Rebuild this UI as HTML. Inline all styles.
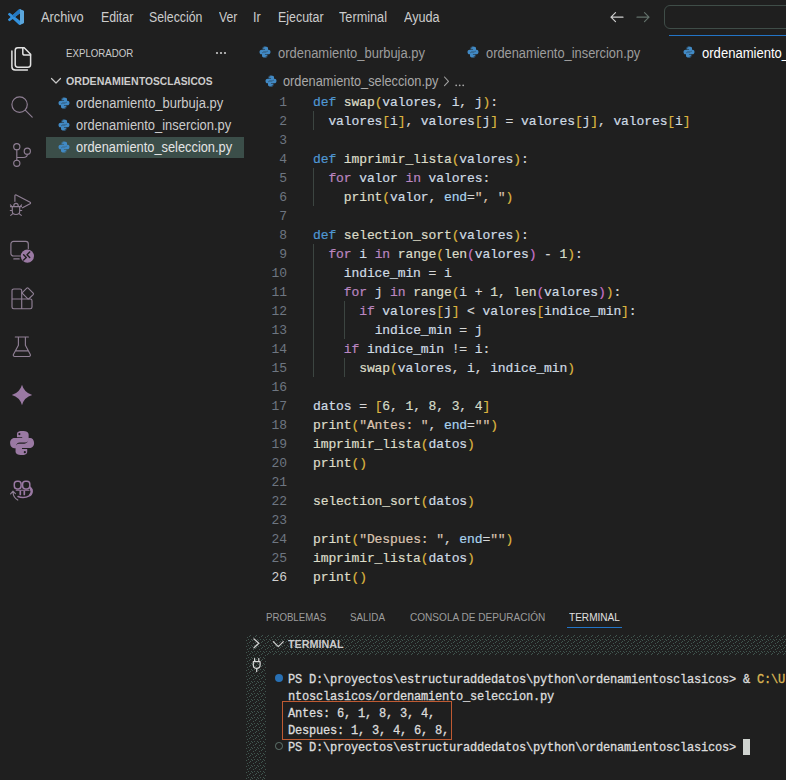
<!DOCTYPE html>
<html lang="es"><head><meta charset="utf-8"><title>ordenamiento_seleccion.py - Visual Studio Code</title>
<style>
html,body{margin:0;padding:0;background:#1f1f1f;}
body{width:786px;height:780px;overflow:hidden;position:relative;font-family:"Liberation Sans", sans-serif;font-size:13px;color:#ccc;}
#app{position:absolute;left:0;top:0;width:786px;height:780px;overflow:hidden;background:#1f1f1f;}
.t{position:absolute;white-space:pre;line-height:20px;height:20px;transform-origin:0 50%;}
.abs{position:absolute;}
.layer{position:absolute;left:0;top:0;width:0;height:0;}
svg{position:absolute;overflow:visible;}
.code{position:absolute;left:313px;top:93px;font-family:"Liberation Mono", monospace;font-size:13px;letter-spacing:-0.1px;color:#d6d6d6;white-space:pre;-webkit-text-stroke:0.2px;}
.code div{height:19px;line-height:19px;}
.ln{position:absolute;left:246px;top:93px;width:41px;text-align:right;font-family:"Liberation Mono", monospace;font-size:13px;letter-spacing:-0.1px;color:#6e7681;}
.ln div{height:19px;line-height:19px;}
.ln .act{color:#d0d0d0;}
.k{color:#4f97d3;} .c{color:#bb86c0;} .b1{color:#dcb440;} .b2{color:#c873c9;} .b3{color:#2f9bf0;}
.s{color:#dcc4b0;} .p{color:#a9d3ee;} .v{color:#cfdbe4;} .f{color:#dcdcc8;} .n{color:#d4dcc8;}
.guide{position:absolute;width:1px;background:#3c4541;}
.term{position:absolute;left:288px;font-family:"Liberation Mono", monospace;font-size:12px;letter-spacing:-0.2px;color:#dcdcdc;white-space:pre;height:17px;line-height:17px;-webkit-text-stroke:0.3px;}
.y{color:#dcb654;}

</style></head><body><div id="app">
<header class="layer" id="titlebar" aria-label="Barra de título">
<div class="abs" style="left:664px;top:5px;width:140px;height:22px;border:1px solid #3f4d48;border-radius:6px"></div>
<span class="t" style="left:41.3px;top:8.0px;font-size:13.8px;font-weight:400;color:#cccccc;transform:scaleX(0.9279)">Archivo</span>
<span class="t" style="left:101px;top:8.0px;font-size:13.8px;font-weight:400;color:#cccccc;transform:scaleX(0.8961)">Editar</span>
<span class="t" style="left:149.3px;top:8.0px;font-size:13.8px;font-weight:400;color:#cccccc;transform:scaleX(0.8926)">Selección</span>
<span class="t" style="left:219px;top:8.0px;font-size:13.8px;font-weight:400;color:#cccccc;transform:scaleX(0.8833)">Ver</span>
<span class="t" style="left:253.3px;top:8.0px;font-size:13.8px;font-weight:400;color:#cccccc;transform:scaleX(0.9126)">Ir</span>
<span class="t" style="left:277.7px;top:8.0px;font-size:13.8px;font-weight:400;color:#cccccc;transform:scaleX(0.9007)">Ejecutar</span>
<span class="t" style="left:339.3px;top:8.0px;font-size:13.8px;font-weight:400;color:#cccccc;transform:scaleX(0.9206)">Terminal</span>
<span class="t" style="left:403.7px;top:8.0px;font-size:13.8px;font-weight:400;color:#cccccc;transform:scaleX(0.9158)">Ayuda</span>
<svg style="left:8px;top:9px" width="16" height="16" viewBox="0 0 24 24"><defs><clipPath id="vc"><path d="M23.15 2.587L18.21.21a1.494 1.494 0 0 0-1.705.29l-9.46 8.63-4.12-3.128a.999.999 0 0 0-1.276.057L.327 7.261A1 1 0 0 0 .326 8.74L3.899 12 .326 15.26a1 1 0 0 0 .001 1.479L1.65 17.94a.999.999 0 0 0 1.276.057l4.12-3.128 9.46 8.63a1.492 1.492 0 0 0 1.704.29l4.942-2.377A1.5 1.5 0 0 0 24 20.06V3.939a1.5 1.5 0 0 0-.85-1.352zm-5.146 14.861L10.826 12l7.178-5.448v10.896z"/></clipPath></defs><g clip-path="url(#vc)"><rect width="24" height="24" fill="#3391dc"/><path d="M6.5 9.5L17 0h1.500v6.200L10.800 12H8z" fill="#2478c0"/><rect x="17.900" y="0" width="6.100" height="24" fill="#5ba6dc"/></g></svg>
<svg style="left:0;top:0" width="786" height="40" viewBox="0 0 786 40" fill="none" stroke-linecap="round" stroke-linejoin="round"><path stroke="#cfcfcf" stroke-width="1.2" d="M623 17.200H611M615.500 12.700l-4.500 4.500 4.500 4.500"/><path stroke="#63716b" stroke-width="1.2" d="M637 17.200h12M644.500 12.700l4.500 4.500-4.500 4.500"/></svg>
</header>
<nav class="layer" id="activitybar" aria-label="Barra de actividades">
<svg style="left:0;top:0" width="48" height="780" viewBox="0 0 48 780" fill="none" stroke-linecap="round" stroke-linejoin="round">
<g stroke="#e2e2e2" stroke-width="1.5"><path d="M17.8 47.8h6.400l6.400 6.400v10.400a2.600 2.600 0 0 1-2.600 2.600H17.800a2.600 2.600 0 0 1-2.600-2.600V50.400a2.600 2.600 0 0 1 2.600-2.600z"/><path d="M22.800 48v5.200a1.900 1.900 0 0 0 1.900 1.900h5.800"/><path d="M11.900 51v15.800a3.200 3.200 0 0 0 3.200 3.200h12.300"/></g>
<g stroke="#8f7f94" stroke-width="1.150"><circle cx="19.600" cy="104.600" r="7.700"/><path d="M25.200 110.200l7 7"/></g>
<g stroke="#8f7f94" stroke-width="1.150"><circle cx="16.800" cy="146.700" r="3.100"/><circle cx="27.300" cy="151.200" r="3.100"/><circle cx="16.800" cy="163.300" r="3.100"/><path d="M16.800 149.800v10.400M27.300 154.300c0 2.400-1.500 3.200-4 3.200h-6.500"/></g>
<g stroke="#8f7f94" stroke-width="1.15"><path d="M14.900 201.300v-5.600a.9.900 0 0 1 1.300-.8l13.900 7.300a.9.900 0 0 1 0 1.600l-7.600 4"/><path d="M12.300 206.600h7.400v4.700a3.700 3.200 0 0 1-7.400 0zM13.700 206.400a2.300 3 0 0 1 4.600 0M10.500 206.600h11M12.300 210.500h-2M19.700 210.500h2M12.900 213.600l-2.200 1.800M19.100 213.600l2.200 1.800M11.800 206.300l-1.400-1.400M20.200 206.300l1.400-1.400"/></g>
<g stroke="#8f7f94" stroke-width="1.150"><path d="M20.300 256H13.500a2.600 2.600 0 0 1-2.600-2.600V244a2.600 2.600 0 0 1 2.600-2.600h12.200a2.600 2.600 0 0 1 2.600 2.600v4.600M13.800 258.900h5.400"/></g><circle cx="27.400" cy="256.100" r="6.600" fill="#9a79a3"/><path stroke="#1f1f1f" stroke-width="1.400" d="M23.600 254.700l2.700 2.700-2.700 2.700M29.700 252l-2.700 2.700 2.700 2.700"/>
<g stroke="#8f7f94" stroke-width="1.150"><path d="M21.700 299v-8.300a1.700 1.700 0 0 0-1.700-1.700h-6.300a1.700 1.700 0 0 0-1.700 1.700V307a1.700 1.700 0 0 0 1.700 1.700h16.600a1.700 1.700 0 0 0 1.700-1.700v-6.300a1.700 1.700 0 0 0-1.700-1.700H12M21.700 299v9.700"/><path d="M22.300 292.700l4.500-4.500a1 1 0 0 1 1.400 0l5 5a1 1 0 0 1 0 1.400l-4.600 4.400M21.900 292.800l6 6"/></g>
<g stroke="#8f7f94" stroke-width="1.150"><path d="M15.300 337h13.100M18.400 337v8.300l-5 9.200a1.400 1.400 0 0 0 1.200 2h14.500a1.400 1.400 0 0 0 1.200-2l-4.900-9.200V337M16 350.800h11.800"/></g>
<path fill="#9a79a3" d="M22 384.800Q24.200 392.800 32.200 395 24.200 397.200 22 405.200 19.800 397.200 11.800 395 19.800 392.800 22 384.800z"/>
</svg>
<svg style="left:9.1px;top:430.1px" width="26.2" height="26.2" viewBox="0 0 24 24"><g fill="#9a79a3" fill-rule="evenodd"><path d="M11.9 1C8 1 7.3 2.6 7.3 4.2V6.6h4.8v.8H5.2C3 7.4 1 8.9 1 12s1.8 4.7 3.6 4.7h1.9v-1.9c0-1.900 1.500-3.300 3.400-3.300h5.100c1.700 0 3-1.400 3-3.100V4.200C18 2.500 16.500 1 11.900 1zM9.500 2.700a1 1 0 1 1 0 2 1 1 0 0 1 0-2z"/><path transform="rotate(180 12 12)" d="M11.9 1C8 1 7.3 2.6 7.3 4.2V6.6h4.8v.8H5.2C3 7.4 1 8.9 1 12s1.8 4.7 3.6 4.7h1.9v-1.9c0-1.900 1.500-3.300 3.400-3.300h5.100c1.700 0 3-1.400 3-3.100V4.200C18 2.500 16.500 1 11.900 1zM9.500 2.700a1 1 0 1 1 0 2 1 1 0 0 1 0-2z"/></g></svg>
<svg style="left:0;top:0" width="48" height="780" viewBox="0 0 48 780" fill="none" stroke-linecap="round" stroke-linejoin="round"><g stroke="#9a79a3" stroke-width="1.500"><rect x="14.300" y="481.300" width="6.800" height="7.600" rx="2.800"/><rect x="22.600" y="481.300" width="7.200" height="7.600" rx="2.800"/><path d="M30 487c1.600 1.200 2 2.500 2 4.500 0 3.500-4.500 6-9 6-2 0-3.600-.4-5-1"/><path d="M20.300 491.300v3.200M24.300 491.300v3.200" stroke-width="1.700"/><path d="M30.900 488.800c1 1.500 1 4.300-.7 6.200" stroke-width="2.400"/><path d="M16.200 490.200h12.800" stroke-width="1.100"/><path d="M17.800 500c-3-1.500-4.600-4.500-4.800-8M10.600 493.800l2.400-2.600 2.400 2.400" stroke="#8f7f94" stroke-width="1.200"/></g></svg>
</nav>
<aside class="layer" id="sidebar" aria-label="Explorador">
<div class="abs" style="left:46px;top:137px;width:198px;height:21px;background:#3b4e49"></div>
<span class="t" style="left:66.2px;top:43.0px;font-size:11px;font-weight:400;color:#cccccc;transform:scaleX(0.8806)">EXPLORADOR</span>
<span class="word"><span class="t" style="left:66.2px;top:71.0px;font-size:11px;font-weight:700;color:#cccccc;transform:scaleX(0.9658)">ORDENAMIEN</span><span class="t" style="left:138.8px;top:71.0px;font-size:11px;font-weight:700;color:#cccccc;transform:scaleX(0.9273)">TOSCLASICOS</span></span>
<span class="t" style="left:75.8px;top:94.0px;font-size:13.8px;font-weight:400;color:#cccccc;transform:scaleX(0.9407)">ordenamiento_burbuja.py</span>
<span class="t" style="left:75.8px;top:116.0px;font-size:13.8px;font-weight:400;color:#cccccc;transform:scaleX(0.9368)">ordenamiento_insercion.py</span>
<span class="t" style="left:75.8px;top:138.0px;font-size:13.8px;font-weight:400;color:#e4e4e4;transform:scaleX(0.9293)">ordenamiento_seleccion.py</span>
<svg style="left:57.7px;top:96.95px" width="12" height="12" viewBox="0 0 24 24"><g fill="#4189c4" fill-rule="evenodd"><path d="M11.9 1C8 1 7.3 2.6 7.3 4.2V6.6h4.8v.8H5.2C3 7.4 1 8.9 1 12s1.8 4.7 3.6 4.7h1.9v-1.9c0-1.900 1.500-3.300 3.400-3.300h5.100c1.700 0 3-1.400 3-3.100V4.200C18 2.500 16.500 1 11.900 1zM9.500 2.700a1 1 0 1 1 0 2 1 1 0 0 1 0-2z"/><path transform="rotate(180 12 12)" d="M11.9 1C8 1 7.3 2.6 7.3 4.2V6.6h4.8v.8H5.2C3 7.4 1 8.9 1 12s1.8 4.7 3.6 4.7h1.9v-1.9c0-1.900 1.500-3.300 3.400-3.300h5.100c1.700 0 3-1.400 3-3.100V4.200C18 2.500 16.500 1 11.900 1zM9.500 2.700a1 1 0 1 1 0 2 1 1 0 0 1 0-2z"/></g></svg>
<svg style="left:57.7px;top:118.95px" width="12" height="12" viewBox="0 0 24 24"><g fill="#4189c4" fill-rule="evenodd"><path d="M11.9 1C8 1 7.3 2.6 7.3 4.2V6.6h4.8v.8H5.2C3 7.4 1 8.9 1 12s1.8 4.7 3.6 4.7h1.9v-1.9c0-1.900 1.500-3.300 3.400-3.300h5.100c1.700 0 3-1.400 3-3.100V4.200C18 2.500 16.500 1 11.900 1zM9.500 2.700a1 1 0 1 1 0 2 1 1 0 0 1 0-2z"/><path transform="rotate(180 12 12)" d="M11.9 1C8 1 7.3 2.6 7.3 4.2V6.6h4.8v.8H5.2C3 7.4 1 8.9 1 12s1.8 4.7 3.6 4.7h1.9v-1.9c0-1.900 1.500-3.300 3.400-3.300h5.100c1.700 0 3-1.400 3-3.100V4.200C18 2.500 16.500 1 11.900 1zM9.500 2.700a1 1 0 1 1 0 2 1 1 0 0 1 0-2z"/></g></svg>
<svg style="left:57.7px;top:140.95px" width="12" height="12" viewBox="0 0 24 24"><g fill="#4189c4" fill-rule="evenodd"><path d="M11.9 1C8 1 7.3 2.6 7.3 4.2V6.6h4.8v.8H5.2C3 7.4 1 8.9 1 12s1.8 4.7 3.6 4.7h1.9v-1.9c0-1.900 1.500-3.300 3.400-3.300h5.100c1.700 0 3-1.400 3-3.100V4.200C18 2.500 16.500 1 11.900 1zM9.500 2.700a1 1 0 1 1 0 2 1 1 0 0 1 0-2z"/><path transform="rotate(180 12 12)" d="M11.9 1C8 1 7.3 2.6 7.3 4.2V6.6h4.8v.8H5.2C3 7.4 1 8.9 1 12s1.8 4.7 3.6 4.7h1.9v-1.9c0-1.900 1.500-3.300 3.400-3.300h5.100c1.700 0 3-1.400 3-3.100V4.200C18 2.500 16.500 1 11.900 1zM9.500 2.700a1 1 0 1 1 0 2 1 1 0 0 1 0-2z"/></g></svg>
<svg style="left:0;top:0" width="786" height="780" viewBox="0 0 786 780" fill="none" stroke-linecap="round" stroke-linejoin="round"><path stroke="#c8c8c8" stroke-width="1.2" d="M51.5 78.5l4.5 4.5 4.5-4.500"/><g fill="#c8c8c8" stroke="none"><circle cx="217" cy="53" r="1.1"/><circle cx="221" cy="53" r="1.1"/><circle cx="225" cy="53" r="1.1"/></g></svg>
</aside>
<main class="layer" id="editor" aria-label="Editor">
<div class="abs" style="left:669px;top:35px;width:117px;height:1px;background:#2374c6"></div>
<span class="t" style="left:277.6px;top:44.0px;font-size:13.8px;font-weight:400;color:#9d9d9d;transform:scaleX(0.9394)">ordenamiento_burbuja.py</span>
<span class="t" style="left:486px;top:44.0px;font-size:13.8px;font-weight:400;color:#9d9d9d;transform:scaleX(0.9314)">ordenamiento_insercion.py</span>
<span class="t" style="left:701.6px;top:44.0px;font-size:13.8px;font-weight:400;color:#ffffff;transform:scaleX(0.9466)">ordenamiento_seleccion.py</span>
<span class="t" style="left:282.6px;top:72.0px;font-size:13.8px;font-weight:400;color:#a9a9a9;transform:scaleX(0.9252)">ordenamiento_seleccion.py</span>
<div class="ln"><div>1</div><div>2</div><div>3</div><div>4</div><div>5</div><div>6</div><div>7</div><div>8</div><div>9</div><div>10</div><div>11</div><div>12</div><div>13</div><div>14</div><div>15</div><div>16</div><div>17</div><div>18</div><div>19</div><div>20</div><div>21</div><div>22</div><div>23</div><div>24</div><div>25</div><div class=act>26</div></div>
<div class="code"><div><span class="k">def</span> <span class="f">swap</span><span class="b1">(</span><span class="v">valores</span>, <span class="v">i</span>, <span class="v">j</span><span class="b1">)</span>:</div><div>  <span class="v">valores</span><span class="b1">[</span><span class="v">i</span><span class="b1">]</span>, <span class="v">valores</span><span class="b1">[</span><span class="v">j</span><span class="b1">]</span> = <span class="v">valores</span><span class="b1">[</span><span class="v">j</span><span class="b1">]</span>, <span class="v">valores</span><span class="b1">[</span><span class="v">i</span><span class="b1">]</span></div><div> </div><div><span class="k">def</span> <span class="f">imprimir_lista</span><span class="b1">(</span><span class="v">valores</span><span class="b1">)</span>:</div><div>  <span class="c">for</span> <span class="v">valor</span> <span class="c">in</span> <span class="v">valores</span>:</div><div>    <span class="f">print</span><span class="b1">(</span><span class="v">valor</span>, <span class="p">end</span>=<span class="s">&quot;, &quot;</span><span class="b1">)</span></div><div> </div><div><span class="k">def</span> <span class="f">selection_sort</span><span class="b1">(</span><span class="v">valores</span><span class="b1">)</span>:</div><div>  <span class="c">for</span> <span class="v">i</span> <span class="c">in</span> <span class="f">range</span><span class="b1">(</span><span class="f">len</span><span class="b2">(</span><span class="v">valores</span><span class="b2">)</span> - <span class="n">1</span><span class="b1">)</span>:</div><div>    <span class="v">indice_min</span> = <span class="v">i</span></div><div>    <span class="c">for</span> <span class="v">j</span> <span class="c">in</span> <span class="f">range</span><span class="b1">(</span><span class="v">i</span> + <span class="n">1</span>, <span class="f">len</span><span class="b2">(</span><span class="v">valores</span><span class="b2">)</span><span class="b1">)</span>:</div><div>      <span class="c">if</span> <span class="v">valores</span><span class="b1">[</span><span class="v">j</span><span class="b1">]</span> &lt; <span class="v">valores</span><span class="b1">[</span><span class="v">indice_min</span><span class="b1">]</span>:</div><div>        <span class="v">indice_min</span> = <span class="v">j</span></div><div>    <span class="c">if</span> <span class="v">indice_min</span> != <span class="v">i</span>:</div><div>      <span class="f">swap</span><span class="b1">(</span><span class="v">valores</span>, <span class="v">i</span>, <span class="v">indice_min</span><span class="b1">)</span></div><div> </div><div><span class="v">datos</span> = <span class="b1">[</span><span class="n">6</span>, <span class="n">1</span>, <span class="n">8</span>, <span class="n">3</span>, <span class="n">4</span><span class="b1">]</span></div><div><span class="f">print</span><span class="b1">(</span><span class="s">&quot;Antes: &quot;</span>, <span class="p">end</span>=<span class="s">&quot;&quot;</span><span class="b1">)</span></div><div><span class="f">imprimir_lista</span><span class="b1">(</span><span class="v">datos</span><span class="b1">)</span></div><div><span class="f">print</span><span class="b1">()</span></div><div> </div><div><span class="f">selection_sort</span><span class="b1">(</span><span class="v">datos</span><span class="b1">)</span></div><div> </div><div><span class="f">print</span><span class="b1">(</span><span class="s">&quot;Despues: &quot;</span>, <span class="p">end</span>=<span class="s">&quot;&quot;</span><span class="b1">)</span></div><div><span class="f">imprimir_lista</span><span class="b1">(</span><span class="v">datos</span><span class="b1">)</span></div><div><span class="f">print</span><span class="b1">()</span></div></div>
<div class="guide" style="left:313px;top:111px;height:19px"></div>
<div class="guide" style="left:313px;top:168px;height:38px"></div>
<div class="guide" style="left:313px;top:244px;height:133px"></div>
<div class="guide" style="left:344px;top:301px;height:38px"></div>
<div class="guide" style="left:344px;top:358px;height:19px"></div>
<svg style="left:258.55px;top:45.8px" width="12" height="12" viewBox="0 0 24 24"><g fill="#4189c4" fill-rule="evenodd"><path d="M11.9 1C8 1 7.3 2.6 7.3 4.2V6.6h4.8v.8H5.2C3 7.4 1 8.9 1 12s1.8 4.7 3.6 4.7h1.9v-1.9c0-1.900 1.500-3.300 3.400-3.300h5.100c1.700 0 3-1.400 3-3.100V4.200C18 2.500 16.500 1 11.900 1zM9.500 2.700a1 1 0 1 1 0 2 1 1 0 0 1 0-2z"/><path transform="rotate(180 12 12)" d="M11.9 1C8 1 7.3 2.6 7.3 4.2V6.6h4.8v.8H5.2C3 7.4 1 8.9 1 12s1.8 4.7 3.6 4.7h1.9v-1.9c0-1.900 1.500-3.300 3.400-3.300h5.100c1.700 0 3-1.400 3-3.100V4.200C18 2.500 16.500 1 11.900 1zM9.500 2.700a1 1 0 1 1 0 2 1 1 0 0 1 0-2z"/></g></svg>
<svg style="left:467px;top:45.8px" width="12" height="12" viewBox="0 0 24 24"><g fill="#4189c4" fill-rule="evenodd"><path d="M11.9 1C8 1 7.3 2.6 7.3 4.2V6.6h4.8v.8H5.2C3 7.4 1 8.9 1 12s1.8 4.7 3.6 4.7h1.9v-1.9c0-1.900 1.500-3.300 3.400-3.300h5.100c1.700 0 3-1.400 3-3.100V4.200C18 2.500 16.500 1 11.900 1zM9.500 2.700a1 1 0 1 1 0 2 1 1 0 0 1 0-2z"/><path transform="rotate(180 12 12)" d="M11.9 1C8 1 7.3 2.6 7.3 4.2V6.6h4.8v.8H5.2C3 7.4 1 8.9 1 12s1.8 4.7 3.6 4.7h1.9v-1.9c0-1.900 1.500-3.300 3.400-3.300h5.100c1.700 0 3-1.400 3-3.100V4.200C18 2.500 16.500 1 11.900 1zM9.500 2.700a1 1 0 1 1 0 2 1 1 0 0 1 0-2z"/></g></svg>
<svg style="left:683.1px;top:45.8px" width="12" height="12" viewBox="0 0 24 24"><g fill="#4189c4" fill-rule="evenodd"><path d="M11.9 1C8 1 7.3 2.6 7.3 4.2V6.6h4.8v.8H5.2C3 7.4 1 8.9 1 12s1.8 4.7 3.6 4.7h1.9v-1.9c0-1.900 1.500-3.300 3.400-3.300h5.100c1.700 0 3-1.400 3-3.100V4.200C18 2.500 16.500 1 11.900 1zM9.500 2.700a1 1 0 1 1 0 2 1 1 0 0 1 0-2z"/><path transform="rotate(180 12 12)" d="M11.9 1C8 1 7.3 2.6 7.3 4.2V6.6h4.8v.8H5.2C3 7.4 1 8.9 1 12s1.8 4.7 3.6 4.7h1.9v-1.9c0-1.900 1.500-3.300 3.400-3.300h5.100c1.700 0 3-1.400 3-3.100V4.200C18 2.500 16.500 1 11.900 1zM9.500 2.700a1 1 0 1 1 0 2 1 1 0 0 1 0-2z"/></g></svg>
<svg style="left:264.8px;top:75px" width="12" height="12" viewBox="0 0 24 24"><g fill="#4189c4" fill-rule="evenodd"><path d="M11.9 1C8 1 7.3 2.6 7.3 4.2V6.6h4.8v.8H5.2C3 7.4 1 8.9 1 12s1.8 4.7 3.6 4.7h1.9v-1.9c0-1.900 1.500-3.300 3.400-3.300h5.100c1.700 0 3-1.400 3-3.100V4.200C18 2.500 16.500 1 11.900 1zM9.500 2.700a1 1 0 1 1 0 2 1 1 0 0 1 0-2z"/><path transform="rotate(180 12 12)" d="M11.9 1C8 1 7.3 2.6 7.3 4.2V6.6h4.8v.8H5.2C3 7.4 1 8.9 1 12s1.8 4.7 3.6 4.7h1.9v-1.9c0-1.900 1.500-3.300 3.400-3.300h5.100c1.700 0 3-1.400 3-3.100V4.200C18 2.500 16.500 1 11.900 1zM9.500 2.700a1 1 0 1 1 0 2 1 1 0 0 1 0-2z"/></g></svg>
<svg style="left:0;top:0" width="786" height="780" viewBox="0 0 786 780" fill="none" stroke-linecap="round" stroke-linejoin="round"><path stroke="#a0a0a0" stroke-width="1.1" d="M444.5 77l4 4.3-4 4.3"/><g fill="#a9a9a9" stroke="none"><circle cx="456.2" cy="85.3" r="0.9"/><circle cx="459.7" cy="85.3" r="0.9"/><circle cx="463.2" cy="85.3" r="0.9"/></g></svg>
</main>
<section class="layer" id="panel" aria-label="Panel">
<svg style="left:0;top:0" width="786" height="780" viewBox="0 0 786 780" shape-rendering="crispEdges"><defs><pattern id="dz" width="6" height="6" patternUnits="userSpaceOnUse"><rect x="3" y="0" width="1" height="1" fill="#40564f"/><rect x="1" y="1" width="1" height="1" fill="#40564f"/><rect x="2" y="3" width="1" height="1" fill="#40564f"/><rect x="5" y="3" width="1" height="1" fill="#40564f"/><rect x="0" y="4" width="1" height="1" fill="#40564f"/><rect x="4" y="5" width="1" height="1" fill="#40564f"/></pattern></defs><rect x="246" y="635" width="540" height="20" fill="url(#dz)"/><rect x="246" y="655" width="20" height="125" fill="url(#dz)"/></svg>
<div class="abs" style="left:567px;top:627px;width:55px;height:1px;background:#2374c6"></div>
<span class="t" style="left:265.6px;top:607.0px;font-size:11px;font-weight:400;color:#9d9d9d;transform:scaleX(0.8778)">PROBLEMAS</span>
<span class="t" style="left:350px;top:607.0px;font-size:11px;font-weight:400;color:#9d9d9d;transform:scaleX(0.8942)">SALIDA</span>
<span class="t" style="left:409.5px;top:607.0px;font-size:11px;font-weight:400;color:#9d9d9d;transform:scaleX(0.9147)">CONSOLA DE DEPURACIÓN</span>
<span class="t" style="left:569.1px;top:607.0px;font-size:11px;font-weight:400;color:#e0e0e0;transform:scaleX(0.9151)">TERMINAL</span>
<span class="t" style="left:288.3px;top:634.0px;font-size:11px;font-weight:700;color:#cccccc;transform:scaleX(0.9784)">TERMINAL</span>
<div class="term" style="top:672px">PS D:\proyectos\estructuraddedatos\python\ordenamientosclasicos&gt; &amp; <span class="y">C:\U</span></div>
<div class="term" style="top:689px">ntosclasicos/ordenamiento_seleccion.py</div>
<div class="term" style="top:706px">Antes: 6, 1, 8, 3, 4, </div>
<div class="term" style="top:723px">Despues: 1, 3, 4, 6, 8, </div>
<div class="term" style="top:740px">PS D:\proyectos\estructuraddedatos\python\ordenamientosclasicos&gt; </div>
<div class="abs" style="left:743px;top:738.5px;width:7px;height:16px;background:#cfd3cf"></div>
<div class="abs" style="left:275px;top:674px;width:8px;height:8px;border-radius:50%;background:#2870b4"></div>
<div class="abs" style="left:275.2px;top:742.2px;width:5.6px;height:5.6px;border-radius:50%;border:1.2px solid #5f756e"></div>
<div class="abs" style="left:281.5px;top:700.9px;width:168.8px;height:37px;border:1.4px solid #bf5a32;box-sizing:content-box"></div>
<svg style="left:0;top:0" width="786" height="780" viewBox="0 0 786 780" fill="none" stroke-linecap="round" stroke-linejoin="round"><path stroke="#d0d0d0" stroke-width="1.3" d="M254 638.9l4.8 4.4-4.8 4.4"/><path stroke="#d0d0d0" stroke-width="1.2" d="M273.3 641.7l5 5 5-5"/><path stroke="#d8d8d8" stroke-width="1.2" d="M254.6 658.5v3M258.8 658.500v3M253.3 661.7h6.8v3.3a3.4 3.4 0 0 1-6.8 0zM256.7 668.4v3.2"/></svg>
</section>
</div></body></html>
